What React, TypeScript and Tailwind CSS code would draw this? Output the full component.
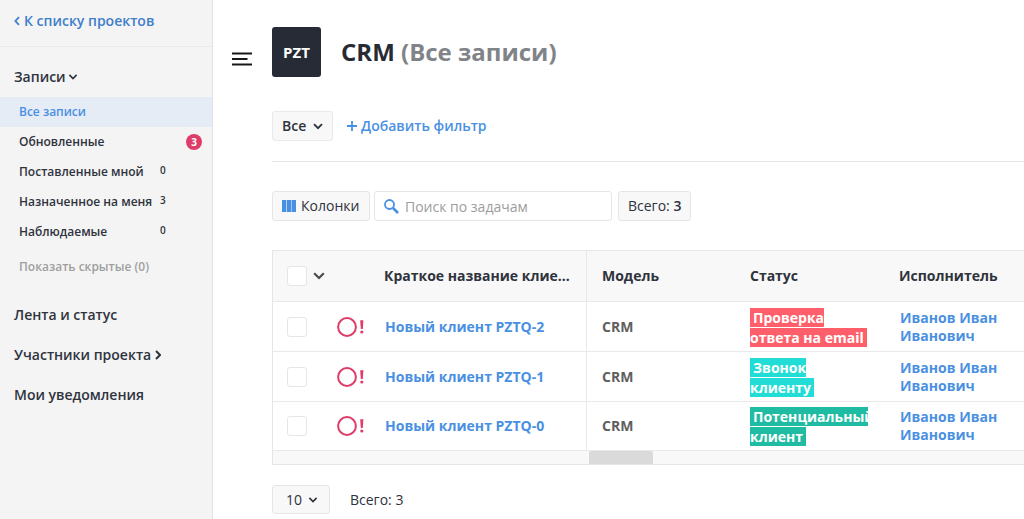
import { useState } from "react";

const filters = [
  { label: "Обновленные", count: 3, highlight: true },
  { label: "Поставленные мной", count: 0 },
  { label: "Назначенное на меня", count: 3 },
  { label: "Наблюдаемые", count: 0 },
];

const rows = [
  { id: "PZTQ-2", model: "CRM", status: "Проверка ответа на email", color: "bg-[#ff5f6a]", user: "Иванов Иван Иванович" },
  { id: "PZTQ-1", model: "CRM", status: "Звонок клиенту", color: "bg-[#22ddd5]", user: "Иванов Иван Иванович" },
  { id: "PZTQ-0", model: "CRM", status: "Потенциальный клиент", color: "bg-[#1fbba2]", user: "Иванов Иван Иванович" },
];

function Chevron({ className = "" }: { className?: string }) {
  return (
    <svg viewBox="0 0 12 8" className={className} fill="none" stroke="currentColor" strokeWidth="2.2">
      <path d="M1.2 1.2 6 6l4.8-4.8" />
    </svg>
  );
}

function Checkbox({ label }: { label: string }) {
  return (
    <input
      type="checkbox"
      aria-label={label}
      className="block size-5 appearance-none rounded-[3px] border border-[#e6e6e6] bg-white checked:bg-[#4a90e2]"
    />
  );
}

function Sidebar() {
  return (
    <aside className="w-[213px] shrink-0 border-r border-[#e2e2e2] bg-[#f4f4f4] font-semibold">
      <div className="flex h-[47px] items-center border-b border-[#e9e9e9] px-3.5 pb-1">
        <a href="#projects" className="flex items-center gap-1 text-sm font-semibold text-[#3f7fcb]">
          <svg viewBox="0 0 6 10" className="h-2.5 w-1.5" fill="none" stroke="currentColor" strokeWidth="1.8">
            <path d="M5 1.2 1.4 5 5 8.8" />
          </svg>
          К списку проектов
        </a>
      </div>

      <nav>
        <button className="mt-5 flex h-5 items-center gap-0.5 px-3.5 text-sm font-semibold">
          Записи
          <Chevron className="h-1.5 w-2.5" />
        </button>
        <ul className="mt-2.5 text-[12px]">
          <li>
            <a href="#all" className="flex h-[30px] items-center bg-[#e5ecf6] pl-[19px] text-[#4a90e2]">
              Все записи
            </a>
          </li>
          {filters.map((item) => (
            <li key={item.label}>
              <a href="#filter" className="flex h-[30px] items-center pr-2.5 pl-[19px]">
                <span className="w-[141px] whitespace-nowrap">{item.label}</span>
                {item.highlight ? (
                  <span className="ml-auto flex size-4 items-center justify-center rounded-full bg-[#dd3d68] text-[10px] font-bold text-white">
                    {item.count}
                  </span>
                ) : (
                  <span className="pb-1 text-[10px]">{item.count}</span>
                )}
              </a>
            </li>
          ))}
        </ul>
        <button className="mt-2.5 block pl-[19px] text-[12px] leading-5 font-semibold text-[#9f9f9f]">
          Показать скрытые (0)
        </button>
        <div className="mt-7 flex flex-col gap-5 px-3.5 text-sm">
          <a href="#feed">Лента и статус</a>
          <a href="#members" className="flex items-center gap-1">
            Участники проекта
            <svg viewBox="0 0 6 10" className="h-2.5 w-1.5" fill="none" stroke="currentColor" strokeWidth="2">
              <path d="M1 1 5 5 1 9" />
            </svg>
          </a>
          <a href="#notifications">Мои уведомления</a>
        </div>
      </nav>
    </aside>
  );
}

function RecordsTable() {
  return (
    <div className="mt-[29px] overflow-hidden border-y border-l border-[#e6e6e6]">
      <table className="w-full table-fixed border-separate border-spacing-0 text-left text-sm">
        <colgroup>
          <col className="w-[57px]" />
          <col className="w-[39px]" />
          <col className="w-[218px]" />
          <col className="w-[148px]" />
          <col className="w-[149px]" />
          <col />
        </colgroup>
        <thead className="bg-[#f8f8f8]">
          <tr className="h-[51px] [&>th]:border-b [&>th]:border-[#e9e9e9]">
            <th className="pl-3.5">
              <div className="flex items-center gap-1.5">
                <Checkbox label="Выбрать все" />
                <button aria-label="Действия" className="text-[#4a4a4a]">
                  <Chevron className="h-2 w-3" />
                </button>
              </div>
            </th>
            <th />
            <th className="truncate border-r pr-4 pl-[15px]">Краткое название клиента</th>
            <th className="px-[15px]">Модель</th>
            <th className="px-[15px]">Статус</th>
            <th className="px-[15px]">Исполнитель</th>
          </tr>
        </thead>
        <tbody className="font-bold">
          {rows.map((row) => (
            <tr key={row.id} className="h-[50px] last:h-[49px] [&>td]:border-b [&>td]:border-[#e9e9e9]">
              <td className="pl-3.5">
                <Checkbox label={row.id} />
              </td>
              <td className="pl-[7px]">
                <svg viewBox="0 0 28 20" className="h-5 w-7" fill="none" stroke="#dd3d68">
                  <circle cx="10" cy="10" r="8.9" strokeWidth="2" />
                  <path d="M23.2 3.3h3.2l-.6 8.7h-2z" fill="#dd3d68" stroke="none" />
                  <circle cx="24.8" cy="15" r="1.6" fill="#dd3d68" stroke="none" />
                </svg>
              </td>
              <td className="border-r pl-4">
                <a href="#record" className="text-[#4a90e2]">
                  Новый клиент {row.id}
                </a>
              </td>
              <td className="px-[15px] text-[#5f5f5f]">{row.model}</td>
              <td className="pt-0.5 pr-4 pl-[15px]">
                <div className="overflow-hidden leading-5 text-white">
                  <span className={`px-[3px] ${row.color}`}>{row.status}</span>
                </div>
              </td>
              <td className="px-4">
                <a href="#user" className="block w-[110px] leading-[18px] text-[#4a90e2]">
                  {row.user}
                </a>
              </td>
            </tr>
          ))}
        </tbody>
      </table>
      <div className="h-[13px] bg-[#f8f8f8]">
        <div className="ml-[316px] h-[13px] w-16 rounded-t-[2px] bg-[#dadada]" />
      </div>
    </div>
  );
}

export default function App() {
  const [query, setQuery] = useState("");

  return (
    <div className="flex min-h-screen overflow-hidden bg-white font-['Open_Sans','Noto_Sans',sans-serif] text-[#2f333d]">
      <Sidebar />
      <main className="flex min-w-0 flex-1 pl-[19px]">
        <button aria-label="Меню" className="mt-[49px] size-5 shrink-0 self-start">
          <svg viewBox="0 0 20 14" className="h-3.5 w-5" stroke="#16181d" strokeWidth="2">
            <path d="M0 1.500h20M0 7h15.500M0 12.500h20" />
          </svg>
        </button>

        <div className="ml-5 min-w-0 flex-1">
          <header className="mt-[27px] flex items-center gap-5">
            <div className="flex h-[50px] w-[49px] items-center justify-center rounded-[3px] bg-[#272b36] text-[15px] font-bold text-white">
              PZT
            </div>
            <h1 className="text-2xl font-bold text-[#272b33]">
              CRM <span className="text-[#808388]">(Все записи)</span>
            </h1>
          </header>

          <div className="mt-[34px] flex items-center gap-3.5 border-b border-[#e6e6e6] pb-5 text-sm">
            <div className="relative">
              <select
                aria-label="Фильтр"
                className="h-[30px] w-[61px] appearance-none rounded-[3px] border border-[#e9e9e9] bg-[#f8f8f8] pl-[9px] font-semibold"
              >
                <option>Все</option>
              </select>
              <Chevron className="pointer-events-none absolute top-3 right-2.5 h-[7px] w-2.5" />
            </div>
            <button className="flex items-center gap-1 font-semibold text-[#4a90e2]">
              <svg viewBox="0 0 10 10" className="size-2.5" stroke="currentColor" strokeWidth="1.8">
                <path d="M5 0v10M0 5h10" />
              </svg>
              Добавить фильтр
            </button>
          </div>

          <div className="mt-[29px] flex items-center text-sm">
            <button className="flex h-[30px] w-[98px] items-center gap-[5px] rounded-[3px] border border-[#e6e6e6] bg-[#f8f8f8] pl-[9px]">
              <svg viewBox="0 0 14 12" className="h-3 w-3.5" fill="#4a90e2">
                <path d="M0 0h4.300v12H0zM4.900 0h4.300v12H4.900zM9.700 0h4.300v12H9.700z" />
              </svg>
              Колонки
            </button>
            <div className="relative ml-1">
              <input
                type="text"
                aria-label="Поиск по задачам"
                placeholder="Поиск по задачам"
                value={query}
                onChange={(e) => setQuery(e.target.value)}
                className="h-[30px] w-[238px] rounded-[3px] border border-[#e6e6e6] bg-white pl-[30px] placeholder:text-[#9d9d9d]"
              />
              <svg
                viewBox="0 0 16 16"
                className="pointer-events-none absolute top-2 left-2.5 size-4"
                fill="none"
                stroke="#4a90e2"
              >
                <circle cx="5.5" cy="5.5" r="4.5" strokeWidth="1.8" />
                <path d="m9 9 5 5" strokeWidth="2.6" />
              </svg>
            </div>
            <div className="ml-1.5 flex h-[30px] items-center rounded-[3px] border border-[#e6e6e6] bg-[#f8f8f8] px-[9px]">
              Всего:&nbsp;<span className="font-semibold">3</span>
            </div>
          </div>

          <RecordsTable />

          <footer className="mt-5 flex items-center gap-5 text-sm">
            <div className="relative">
              <select
                aria-label="Записей на странице"
                className="h-[29px] w-[58px] appearance-none rounded-[3px] border border-[#e6e6e6] bg-[#f8f8f8] pl-[13px]"
              >
                <option>10</option>
                <option>20</option>
              </select>
              <Chevron className="pointer-events-none absolute top-3 right-3 h-1.5 w-2.5" />
            </div>
            <span>Всего: 3</span>
          </footer>
        </div>
      </main>
    </div>
  );
}
